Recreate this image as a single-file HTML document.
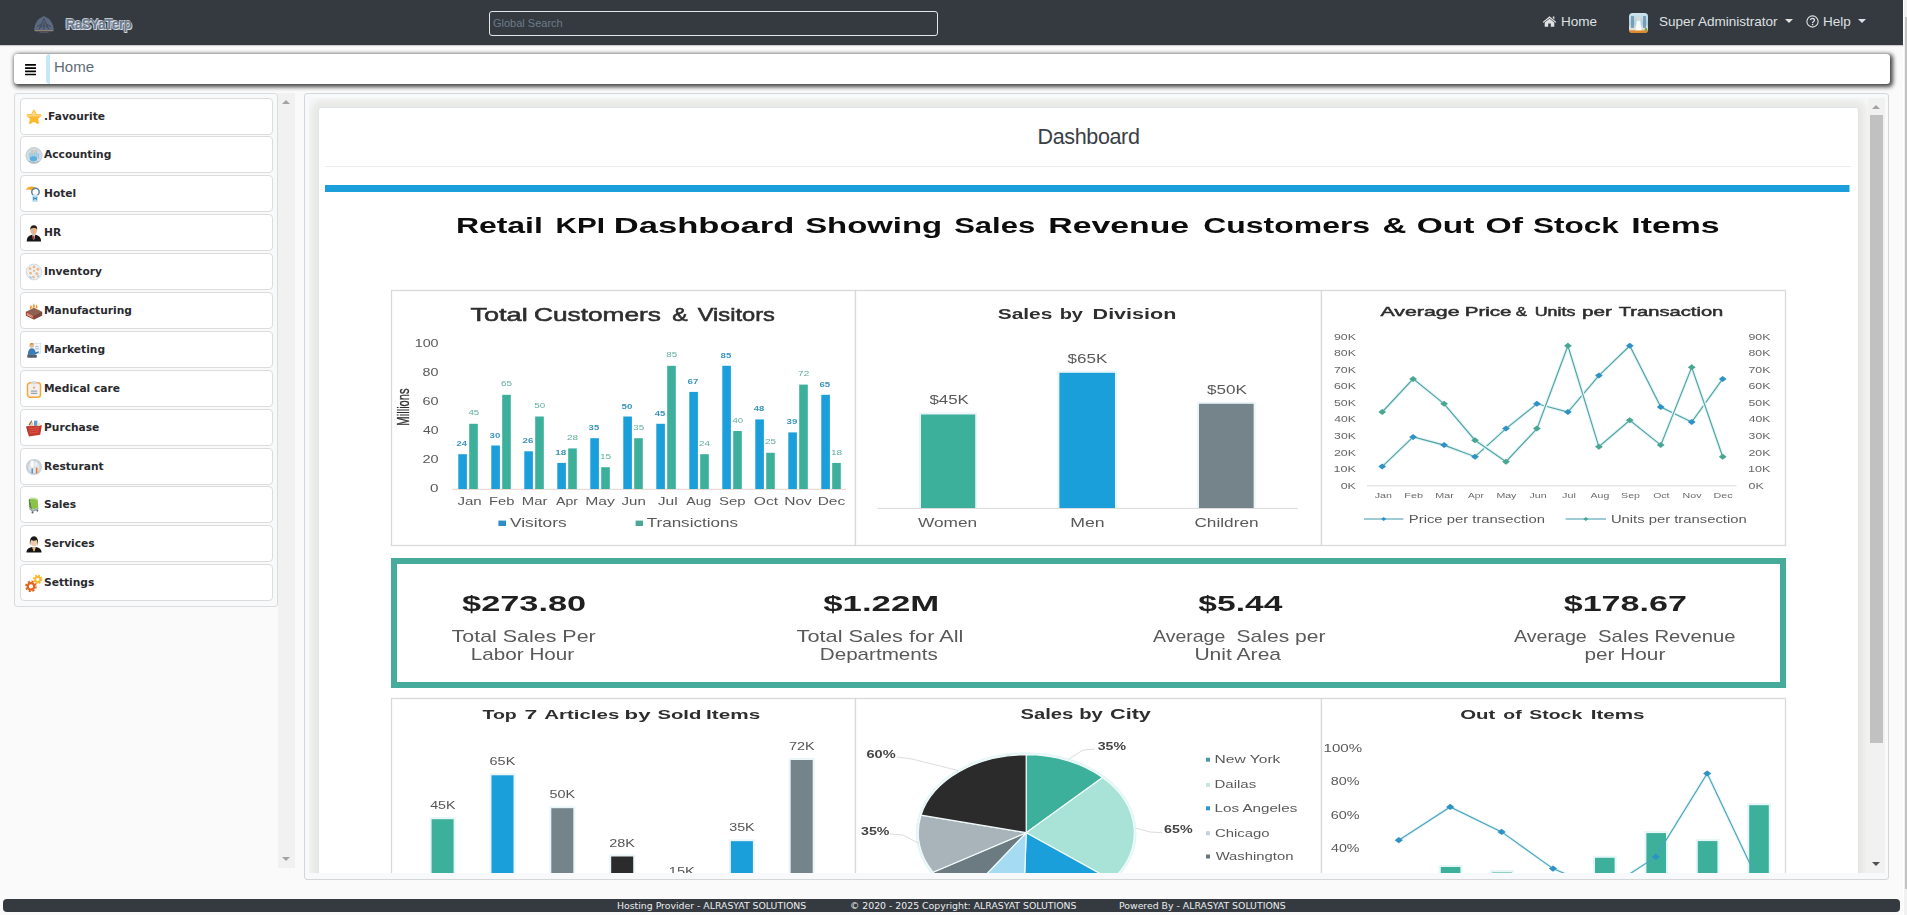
<!DOCTYPE html>
<html lang="en">
<head>
<meta charset="utf-8">
<title>RaSYaTerp - Home</title>
<style>
*{box-sizing:border-box}
html,body{margin:0;padding:0}
body{width:1907px;height:915px;overflow:hidden;background:#fafafa;font-family:"Liberation Sans",Arial,sans-serif;position:relative;color:#212529}
.abs{position:absolute}
/* ---------- top navbar ---------- */
#nav{position:absolute;left:0;top:0;width:1903px;height:45px;background:#343a40;box-shadow:0 1px 1px rgba(0,0,0,.18)}
#brand{position:absolute;left:65.5px;top:13.7px;font-size:14px;font-weight:bold;color:#6b7a90;letter-spacing:-.8px;line-height:20px;text-shadow:.9px .9px 0 rgba(238,242,247,.9),-.8px -.6px 0 rgba(238,242,247,.75),-.8px .8px 0 rgba(238,242,247,.6)}
#search{position:absolute;left:489px;top:11px;width:449px;height:25px;border:1px solid #e4e6e8;border-radius:3px;color:#6c7b8b;font-size:11px;line-height:23px;padding-left:3px}
.navtxt{position:absolute;top:13px;font-size:13.5px;line-height:18px;color:#dfe1e4;white-space:nowrap}
.caret{position:absolute;width:0;height:0;border-left:4.2px solid transparent;border-right:4.2px solid transparent;border-top:4.2px solid #dfe1e3}
/* ---------- page scrollbar sliver ---------- */
#pgsb{position:absolute;left:1903px;top:0;width:4px;height:915px;background:#f1f1f1;border-left:1px solid #fff}
#pgsb i{position:absolute;left:1px;top:17px;width:3px;height:872px;background:#c1c1c1}
/* ---------- breadcrumb ---------- */
#crumb{position:absolute;left:14px;top:54px;width:1876px;height:30px;background:#fff;border-radius:3.5px;box-shadow:1.5px 1.5px 4px 1px rgba(0,0,0,.72)}
#crumb .sep{position:absolute;left:32px;top:0;width:9px;height:30px;border-left:4px solid #c6e7f4;border-radius:4px 0 0 4px}
#crumb .home{position:absolute;left:40px;top:3.4px;font-size:15px;line-height:20px;color:#5d6c78}
#burger{position:absolute;left:11px;top:9.65px;width:11px;height:12px}
#burger i{position:absolute;left:0;width:11px;height:1.7px;background:#000;border-radius:.5px}
/* ---------- sidebar ---------- */
#side{position:absolute;left:14px;top:93px;width:264px;height:514px;border:1px solid #d9dbdd;border-radius:3px;background:#f8f9fb}
.mi{position:absolute;left:5px;width:253px;height:37px;background:#fff;border:1px solid #dcdcdc;border-radius:4px}
.mi span{position:absolute;left:23px;top:11px;font-family:"DejaVu Sans",Verdana,sans-serif;font-weight:bold;font-size:10.67px;line-height:14px;color:#2a2a2e;white-space:nowrap}
.mi svg{position:absolute;left:4px;top:9px;width:18px;height:18px}
#sidesb{position:absolute;left:278px;top:93px;width:17px;height:775px;background:#f1f1f1}
.arr{position:absolute;width:0;height:0;border-left:4px solid transparent;border-right:4px solid transparent}
/* ---------- main ---------- */
#main{position:absolute;left:304px;top:93px;width:1585px;height:787px;border:1px solid #d4d6d8;border-radius:3px;background:#f8f9fb}
#scroll{position:absolute;left:4px;top:4px;width:1576px;height:775px;overflow:hidden;background:#f8f9fa}
#card{position:absolute;left:9px;top:9px;width:1541px;height:900px;background:#fff;border:1px solid #dfe4ea;border-radius:3px;box-shadow:0 0 9px 7px #e7e7e4}
#ttl{position:absolute;left:0;top:13.6px;width:100%;text-align:center;font-size:21.5px;letter-spacing:-.35px;line-height:30px;color:#3a3e47}
#dash{position:absolute;left:0;top:0;filter:blur(.55px)}
#hr{position:absolute;left:6px;top:58px;width:1526px;height:1px;background:#eaeced}
#msb{position:absolute;left:1559px;top:0;width:17px;height:775px;background:#f1f1f1}
#msb .th{position:absolute;left:2px;top:17px;width:13px;height:628px;background:#c1c1c1}
/* ---------- footer ---------- */
#foot{position:absolute;left:3px;top:899px;width:1897px;height:13px;background:#343a40;border-radius:4px;color:#eceef0;font-family:"DejaVu Sans",Tahoma,sans-serif;font-size:9.33px;line-height:13px;white-space:nowrap}
#foot span{position:absolute;top:0}
</style>
</head>
<body>
<div id="nav">
  <svg class="abs" style="left:33px;top:15px" width="22" height="20" viewBox="0 0 22 20"><path d="M10.900 1Q16 3 18.400 7Q20.500 10 20.800 14V15.600Q20.800 16.300 20 16.300H2Q1.200 16.300 1.200 15.600V14Q1.500 10 3.400 7Q6 3 10.900 1Z" fill="#5a6880"/><path d="M10.900 3.500L6 14.500M10.900 3.500L15.800 14.500M10.900 7V14.500M4 11.500L8.700 9M17.800 11.500L13.100 9M7.500 12.500l3.400-2.600 3.400 2.600" stroke="#3d4553" stroke-width=".9" fill="none"/><rect x="2" y="15" width="17.800" height="1.200" fill="#92806c"/><rect x="6.500" y="17.200" width="9" height=".9" fill="#505a6b"/></svg>
  <div id="brand">RaSYaTerp</div>
  <div id="search">Global Search</div>
  <svg class="abs" style="left:1542px;top:15px" width="15" height="12" viewBox="0 0 15 12"><path d="M7.5 1.2 L14.3 6.9 L13.5 7.8 L7.5 2.9 L1.5 7.8 L0.7 6.9Z M10.8 1.4h1.6v3l-1.6-1.35Z M2.7 7.6 L7.5 3.7 L12.3 7.6 V11.8 H8.8 V8.6 H6.2 V11.8 H2.7Z" fill="#dfe1e3"/></svg>
  <div class="navtxt" style="left:1561px">Home</div>
  <svg class="abs" style="left:1629px;top:13px" width="19" height="20" viewBox="0 0 19 20"><defs><clipPath id="avc"><rect width="19" height="20" rx="3.5"/></clipPath><linearGradient id="avg" x1="0" y1="0" x2="0" y2="1"><stop offset="0" stop-color="#cfe4ee"/><stop offset=".55" stop-color="#a9cfe0"/><stop offset=".8" stop-color="#e8e6e0"/><stop offset="1" stop-color="#d98a36"/></linearGradient></defs><g clip-path="url(#avc)"><rect width="19" height="20" fill="url(#avg)"/><rect x="2" y="3" width="3" height="12" fill="#5f87a0" opacity=".7"/><rect x="14" y="3" width="3" height="12" fill="#5f87a0" opacity=".7"/><path d="M6.5 19 L7.5 8.5 Q9.5 6.5 11.5 8.5 L12.5 19Z" fill="#f7fbfd"/><circle cx="9.5" cy="6" r="1.8" fill="#e9d6c4"/><rect x="0" y="17.5" width="19" height="2.5" fill="#dd8a2e"/><circle cx="17" cy="16.5" r="1.4" fill="#6aa84f"/></g></svg>
  <div class="navtxt" style="left:1659px">Super Administrator</div>
  <div class="caret" style="left:1784.8px;top:19px"></div>
  <svg class="abs" style="left:1806px;top:15px" width="13" height="13" viewBox="0 0 13 13"><circle cx="6.5" cy="6.5" r="5.6" fill="none" stroke="#dfe1e3" stroke-width="1.1"/><path d="M4.6 5.1 C4.6 2.9 8.5 2.9 8.5 5.1 C8.5 6.5 6.6 6.5 6.6 7.9" fill="none" stroke="#dfe1e3" stroke-width="1.3"/><rect x="5.9" y="8.8" width="1.4" height="1.4" fill="#dfe1e3"/></svg>
  <div class="navtxt" style="left:1823px">Help</div>
  <div class="caret" style="left:1858.3px;top:19px"></div>
</div>
<div id="pgsb"><i></i></div>

<div id="crumb">
  <svg id="burger" viewBox="0 0 11 12"><rect x="0" y="0" width="11" height="1.700" rx=".4"/><rect x="0" y="3.250" width="11" height="1.700" rx=".4"/><rect x="0" y="6.450" width="11" height="1.700" rx=".4"/><rect x="0" y="9.650" width="11" height="1.700" rx=".4"/></svg>
  <div class="sep"></div>
  <div class="home">Home</div>
</div>

<div id="side">
<div class="mi" style="top:4px"><svg viewBox="0 0 16 16"><path d="M8 2.300l1.700 3.700 4 .5-3 2.800.8 4L8 11.300 4.500 13.300l.8-4-3-2.800 4-.5z" fill="#fdb92a" stroke="#fdb92a" stroke-width="1.800" stroke-linejoin="round"/><path d="M8 1.600l2 4.200 4.600.5-1.300 1.200H2.700L1.400 6.300l4.600-.5z" fill="#ffd88c" opacity=".85"/></svg><span>.Favourite</span></div>
<div class="mi" style="top:42px"><svg viewBox="0 0 16 16"><circle cx="8" cy="8.500" r="7.200" fill="#d3dbe0"/><circle cx="8" cy="8.500" r="7.200" fill="none" stroke="#bcc7cd" stroke-width=".7"/><path d="M4.500 11V6M6.300 11V3.800M8.200 11V5M10 11V3.500M11.800 11V6.500" stroke="#8cc3e2" stroke-width="1.100"/><path d="M5 3.500l5.500 1.200M6 6.200l5.500-1.700" stroke="#e6c9a4" stroke-width=".7"/><ellipse cx="7.500" cy="11.300" rx="3.200" ry="2.300" fill="#5aaee0"/><path d="M3.500 13.500q4.500 2.500 9 0" stroke="#aab7be" stroke-width=".9" fill="none"/></svg><span>Accounting</span></div>
<div class="mi" style="top:81px"><svg viewBox="0 0 16 16"><path d="M.5 4.2C3 .8 7.5 .6 10.5 3.2L6.3 4.9Q3.5 3.4 .5 4.2z" fill="#f7a823"/><circle cx="9.3" cy="6.2" r="3.3" fill="none" stroke="#5d7f9b" stroke-width="1.3"/><rect x="6.3" y="8.6" width="5.2" height="6.6" rx="1.2" fill="#c4e4f4"/><path d="M7.8 10.4v3.2M10 10.4v3.2M7.8 12h2.2" stroke="#3f7fb0" stroke-width=".9"/></svg><span>Hotel</span></div>
<div class="mi" style="top:120px"><svg viewBox="0 0 16 16"><path d="M1.5 15.5C1.5 11 4.5 9.6 7.8 9.6S14.3 11 14.3 15.5z" fill="#17171a"/><path d="M6.6 9.8h2.4l-.4 3.4-.8.9-.8-.9z" fill="#f3f3f3"/><path d="M7.3 10.3h1l.3 2.6-.8.8-.8-.8z" fill="#c4241c"/><ellipse cx="7.7" cy="5.6" rx="2.9" ry="3.5" fill="#e4b590"/><path d="M4.7 5.2C4.5 2 6.3 1 7.9 1s3.3 1 2.9 4.1C10 3.6 8.700 3.500 7.600 3.600 6 3.700 5.200 4.100 4.700 5.200z" fill="#2a2018"/></svg><span>HR</span></div>
<div class="mi" style="top:159px"><svg viewBox="0 0 16 16"><circle cx="8" cy="8" r="7" fill="#edf0f2"/><circle cx="8" cy="8" r="7" fill="none" stroke="#cfd6db" stroke-width=".8"/><g fill="#eeb98a"><circle cx="4.500" cy="5" r="1.300"/><circle cx="8" cy="3.500" r="1.200"/><circle cx="11.500" cy="5.500" r="1.300"/><circle cx="5" cy="9" r="1.200"/><circle cx="10.500" cy="9.500" r="1.300"/><circle cx="7.500" cy="12.500" r="1.200"/><circle cx="8" cy="7" r="1"/></g><path d="M4 12l2 1.500M11 12.500l1.500-1.500" stroke="#8fb9d3" stroke-width=".9"/></svg><span>Inventory</span></div>
<div class="mi" style="top:198px"><svg viewBox="0 0 16 16"><path d="M.8 8.600L8 5l7.200 3.600v3.400L8 15.600.8 12z" fill="#8d6250"/><path d="M.8 8.600L8 12.200v3.400L.8 12z" fill="#b43a2c"/><path d="M8 12.200l7.200-3.600V12L8 15.600z" fill="#7a4a3c"/><path d="M4.200 6.500c0-2 1-2.500.8-4.300 1 1 1.200 2.300 1 3.300zM6.800 5.500c0-2 1-2.600.8-4.400 1 1 1.300 2.400 1.100 3.400zM9.400 6c0-1.800.9-2.300.7-3.900.9.900 1.100 2.100.9 3.100z" fill="#f08a24"/><path d="M2 10.200l4.500 2.200v1.300L2 11.500zM2.500 10.900v.9M3.800 11.500v.9M5.100 12.100v.9" stroke="#f0d9c8" stroke-width=".5" fill="none"/></svg><span>Manufacturing</span></div>
<div class="mi" style="top:237px"><svg viewBox="0 0 16 16"><rect x="7.500" y="2" width="6.500" height="9" fill="#f4f6f8" stroke="#d3dae0" stroke-width=".6"/><circle cx="5.800" cy="4" r="2" fill="#e9b98f"/><path d="M4.200 3.200C4.400 1.500 7 1.300 7.600 3z" fill="#d9832a"/><path d="M2.500 12.500C2.500 8.500 4 6.500 6 6.500s3 1.500 3.500 3.500l2.500-1 .5 1.300-3.700 2z" fill="#3a7cb4"/><rect x="2" y="12.300" width="8.500" height="2.500" rx=".6" fill="#54606b"/><path d="M9 5l3 0M9 7l3.500 0" stroke="#7fb1d6" stroke-width=".7"/></svg><span>Marketing</span></div>
<div class="mi" style="top:276px"><svg viewBox="0 0 16 16"><rect x="2.200" y="2.500" width="11.600" height="12.800" rx="2.400" fill="#f1f1f1" stroke="#f5a836" stroke-width="1.300"/><rect x="5.700" y="1" width="4.600" height="2.800" rx=".8" fill="#d5d9dc"/><circle cx="8" cy="6.800" r="1" fill="#f0a868"/><path d="M5.200 9.800h5.600M5.200 11.800h5.600" stroke="#9ba3a9" stroke-width="1.100"/></svg><span>Medical care</span></div>
<div class="mi" style="top:315px"><svg viewBox="0 0 16 16"><path d="M1 6.500l14-1-1.500 8.500-10 1.500z" fill="#c63a2e"/><path d="M1 6.500l2.500 9L2 8z" fill="#8f241c"/><path d="M3.500 8.500l9-.8M3.800 10.500l8.400-.9M4.200 12.500l7.600-1" stroke="#e4675b" stroke-width=".6"/><circle cx="5.500" cy="4.500" r="2" fill="#e6c9a5"/><rect x="8" y="1.500" width="3" height="4.500" fill="#5d9ad0"/><circle cx="12.200" cy="4.800" r="1.500" fill="#f2e2c4"/><path d="M3.500 5.500L6 1.500" stroke="#7a5b45" stroke-width=".9"/></svg><span>Purchase</span></div>
<div class="mi" style="top:354px"><svg viewBox="0 0 16 16"><circle cx="8" cy="8" r="7.200" fill="#c9d1d6"/><circle cx="8" cy="8" r="5" fill="#dfe5e8"/><path d="M5.500 2.500v4.200c0 1 1.800 1 1.800 0V2.500M6.400 2.500v11" stroke="#fbfcfd" stroke-width=".9" fill="none"/><path d="M10.300 2.500c-1.200 1.200-1.300 4.300 0 5.500v1z" fill="#fbfcfd"/><rect x="9.700" y="8.500" width="1.300" height="5.300" rx=".5" fill="#e9772b"/><rect x="5.800" y="9" width="1.200" height="4.800" rx=".5" fill="#3f86bd"/></svg><span>Resturant</span></div>
<div class="mi" style="top:392px"><svg viewBox="0 0 16 16"><path d="M4.300 2.200l7 .8.500 7.500-5.300 1.800z" fill="#8bc34a"/><path d="M4.300 2.200l2.200 10.100-2.700-2.200-.5-6.500z" fill="#558b2f"/><path d="M4.300 2.200l7 .8-1.500-1.500-4.700-.5z" fill="#c5e1a5"/><path d="M3.800 10.200l2.700 2.200 5.300-1.900.2 1.500-5.500 2.200-2.700-2.500z" fill="#9aa3aa"/><circle cx="6.700" cy="14.600" r=".9" fill="#5a6268"/><circle cx="11" cy="13" r=".8" fill="#5a6268"/></svg><span>Sales</span></div>
<div class="mi" style="top:431px"><svg viewBox="0 0 16 16"><path d="M1.300 15.500c0-3.500 3-4.800 6.700-4.800s6.700 1.300 6.700 4.800z" fill="#141416"/><path d="M6.300 10.800h3.400L8 14.800z" fill="#f4f4f4"/><path d="M7.500 11.200h1l.4 2.200-.9 1-.9-1z" fill="#f0a62b"/><ellipse cx="8" cy="6.600" rx="2.700" ry="3.300" fill="#efc8a6"/><path d="M4.600 9.500C3.600 3.500 5.700 1 8 1s4.400 2.500 3.400 8.500c-.2-2.500-.4-4.200-1.200-5-1.400.7-3.300.7-4.600 0-.7.800-.9 2.500-1 5z" fill="#1d1a18"/></svg><span>Services</span></div>
<div class="mi" style="top:470px"><svg viewBox="0 0 16 16"><g fill="none" stroke-linecap="butt"><circle cx="5.300" cy="11" r="2.900" stroke="#e3621d" stroke-width="2"/><circle cx="5.300" cy="11" r="4.400" stroke="#e3621d" stroke-width="1.500" stroke-dasharray="1.900 1.560"/><circle cx="11.300" cy="4.800" r="2.300" stroke="#f8b62a" stroke-width="1.700"/><circle cx="11.300" cy="4.800" r="3.600" stroke="#f8b62a" stroke-width="1.300" stroke-dasharray="1.550 1.280"/></g></svg><span>Settings</span></div>
</div>
<div id="sidesb"><div class="arr" style="left:4px;top:7px;border-bottom:4px solid #a3a3a3"></div><div class="arr" style="left:4px;top:764px;border-top:4px solid #a3a3a3"></div></div>

<div id="main">
  <div id="scroll">
    <div id="card">
      <div id="ttl">Dashboard</div>
      <div id="hr"></div>
      <svg id="dash" viewBox="319 108 1538 900" width="1538" height="900" font-family="Liberation Sans, Arial, sans-serif">
<rect x="325" y="185" width="1524.5" height="7" fill="#1b9fdb"/>
<text x="455.9" y="232.8" font-size="22.8" font-weight="bold" fill="#0d0d0d" textLength="87" lengthAdjust="spacingAndGlyphs">Retail</text>
<text x="555.5" y="232.8" font-size="22.8" font-weight="bold" fill="#0d0d0d" textLength="49.4" lengthAdjust="spacingAndGlyphs">KPI</text>
<text x="613.8" y="232.8" font-size="22.8" font-weight="bold" fill="#0d0d0d" textLength="180.6" lengthAdjust="spacingAndGlyphs">Dashboard</text>
<text x="805.2" y="232.8" font-size="22.8" font-weight="bold" fill="#0d0d0d" textLength="137" lengthAdjust="spacingAndGlyphs">Showing</text>
<text x="954.2" y="232.8" font-size="22.8" font-weight="bold" fill="#0d0d0d" textLength="81" lengthAdjust="spacingAndGlyphs">Sales</text>
<text x="1048.3" y="232.8" font-size="22.8" font-weight="bold" fill="#0d0d0d" textLength="140.8" lengthAdjust="spacingAndGlyphs">Revenue</text>
<text x="1203.3" y="232.8" font-size="22.8" font-weight="bold" fill="#0d0d0d" textLength="166.8" lengthAdjust="spacingAndGlyphs">Customers</text>
<text x="1382.4" y="232.8" font-size="22.8" font-weight="bold" fill="#0d0d0d" textLength="23.9" lengthAdjust="spacingAndGlyphs">&amp;</text>
<text x="1416.7" y="232.8" font-size="22.8" font-weight="bold" fill="#0d0d0d" textLength="57.6" lengthAdjust="spacingAndGlyphs">Out</text>
<text x="1485.5" y="232.8" font-size="22.8" font-weight="bold" fill="#0d0d0d" textLength="37.4" lengthAdjust="spacingAndGlyphs">Of</text>
<text x="1533" y="232.8" font-size="22.8" font-weight="bold" fill="#0d0d0d" textLength="85.9" lengthAdjust="spacingAndGlyphs">Stock</text>
<text x="1631.3" y="232.8" font-size="22.8" font-weight="bold" fill="#0d0d0d" textLength="88.3" lengthAdjust="spacingAndGlyphs">Items</text>
<rect x="391.5" y="290.5" width="464" height="255" fill="#fff" stroke="#d9d9d9" stroke-width="1.3"/>
<rect x="855.5" y="290.5" width="466" height="255" fill="#fff" stroke="#d9d9d9" stroke-width="1.3"/>
<rect x="1321.5" y="290.5" width="464" height="255" fill="#fff" stroke="#d9d9d9" stroke-width="1.3"/>
<rect x="391.5" y="698.5" width="464" height="232" fill="#fff" stroke="#d9d9d9" stroke-width="1.3"/>
<rect x="855.5" y="698.5" width="466" height="232" fill="#fff" stroke="#d9d9d9" stroke-width="1.3"/>
<rect x="1321.5" y="698.5" width="464" height="232" fill="#fff" stroke="#d9d9d9" stroke-width="1.3"/>
<text x="470.5" y="320.5" font-size="18.6" fill="#2e2e2e" textLength="57.2" lengthAdjust="spacingAndGlyphs" stroke="#2e2e2e" stroke-width=".55">Total</text>
<text x="534" y="320.5" font-size="18.6" fill="#2e2e2e" textLength="126.9" lengthAdjust="spacingAndGlyphs" stroke="#2e2e2e" stroke-width=".55">Customers</text>
<text x="672.2" y="320.5" font-size="18.6" fill="#2e2e2e" textLength="15.4" lengthAdjust="spacingAndGlyphs" stroke="#2e2e2e" stroke-width=".55">&amp;</text>
<text x="697.7" y="320.5" font-size="18.6" fill="#2e2e2e" textLength="77.3" lengthAdjust="spacingAndGlyphs" stroke="#2e2e2e" stroke-width=".55">Visitors</text>
<text x="430" y="492.4" font-size="10.9" fill="#595959" textLength="8.5" lengthAdjust="spacingAndGlyphs">0</text>
<text x="422.4" y="463.4" font-size="10.9" fill="#595959" textLength="16.1" lengthAdjust="spacingAndGlyphs">20</text>
<text x="422.9" y="434.4" font-size="10.9" fill="#595959" textLength="15.6" lengthAdjust="spacingAndGlyphs">40</text>
<text x="422.4" y="405.4" font-size="10.9" fill="#595959" textLength="16.1" lengthAdjust="spacingAndGlyphs">60</text>
<text x="422.6" y="376.4" font-size="10.9" fill="#595959" textLength="15.9" lengthAdjust="spacingAndGlyphs">80</text>
<text x="414.7" y="347.4" font-size="10.9" fill="#595959" textLength="23.9" lengthAdjust="spacingAndGlyphs">100</text>
<text transform="translate(409.2,407) rotate(-90)" text-anchor="middle" font-size="17" fill="#2f2f2f" stroke="#2f2f2f" stroke-width=".3" textLength="37.3" lengthAdjust="spacingAndGlyphs">Millions</text>
<line x1="452" y1="489.3" x2="846" y2="489.3" stroke="#e3d3cf" stroke-width="1"/>
<rect x="458.3" y="454.2" width="8.6" height="34.8" fill="#1b9fdb"/>
<rect x="469.2" y="423.8" width="8.6" height="65.2" fill="#3cb09b"/>
<text x="456.6" y="446.2" font-size="7.2" font-weight="bold" fill="#3a93bd" textLength="10.4" lengthAdjust="spacingAndGlyphs">24</text>
<text x="468.4" y="415.4" font-size="7.2" fill="#5fae9f" textLength="10.7" lengthAdjust="spacingAndGlyphs">45</text>
<text x="457.4" y="504.5" font-size="10.9" fill="#595959" textLength="24.3" lengthAdjust="spacingAndGlyphs">Jan</text>
<rect x="491.3" y="445.5" width="8.6" height="43.5" fill="#1b9fdb"/>
<rect x="502.2" y="394.8" width="8.6" height="94.2" fill="#3cb09b"/>
<text x="489.6" y="437.5" font-size="7.2" font-weight="bold" fill="#3a93bd" textLength="10.7" lengthAdjust="spacingAndGlyphs">30</text>
<text x="501.1" y="386.4" font-size="7.2" fill="#5fae9f" textLength="11" lengthAdjust="spacingAndGlyphs">65</text>
<text x="489" y="504.5" font-size="10.9" fill="#595959" textLength="25.4" lengthAdjust="spacingAndGlyphs">Feb</text>
<rect x="524.3" y="451.3" width="8.6" height="37.7" fill="#1b9fdb"/>
<rect x="535.2" y="416.5" width="8.6" height="72.5" fill="#3cb09b"/>
<text x="522.5" y="443.3" font-size="7.2" font-weight="bold" fill="#3a93bd" textLength="10.8" lengthAdjust="spacingAndGlyphs">26</text>
<text x="534.2" y="408.2" font-size="7.2" fill="#5fae9f" textLength="10.9" lengthAdjust="spacingAndGlyphs">50</text>
<text x="521.8" y="504.5" font-size="10.9" fill="#595959" textLength="25.7" lengthAdjust="spacingAndGlyphs">Mar</text>
<rect x="557.3" y="462.9" width="8.6" height="26.1" fill="#1b9fdb"/>
<rect x="568.2" y="448.4" width="8.6" height="40.6" fill="#3cb09b"/>
<text x="555.2" y="454.9" font-size="7.2" font-weight="bold" fill="#3a93bd" textLength="11" lengthAdjust="spacingAndGlyphs">18</text>
<text x="567.1" y="440.1" font-size="7.2" fill="#5fae9f" textLength="11" lengthAdjust="spacingAndGlyphs">28</text>
<text x="556" y="504.5" font-size="10.9" fill="#595959" textLength="21.9" lengthAdjust="spacingAndGlyphs">Apr</text>
<rect x="590.3" y="438.2" width="8.6" height="50.8" fill="#1b9fdb"/>
<rect x="601.2" y="467.2" width="8.6" height="21.8" fill="#3cb09b"/>
<text x="588.6" y="430.2" font-size="7.2" font-weight="bold" fill="#3a93bd" textLength="10.6" lengthAdjust="spacingAndGlyphs">35</text>
<text x="599.9" y="458.9" font-size="7.2" fill="#5fae9f" textLength="11.3" lengthAdjust="spacingAndGlyphs">15</text>
<text x="585.2" y="504.5" font-size="10.9" fill="#595959" textLength="29.7" lengthAdjust="spacingAndGlyphs">May</text>
<rect x="623.3" y="416.5" width="8.6" height="72.5" fill="#1b9fdb"/>
<rect x="634.2" y="438.2" width="8.6" height="50.8" fill="#3cb09b"/>
<text x="621.5" y="408.5" font-size="7.2" font-weight="bold" fill="#3a93bd" textLength="10.8" lengthAdjust="spacingAndGlyphs">50</text>
<text x="633.3" y="429.9" font-size="7.2" fill="#5fae9f" textLength="10.9" lengthAdjust="spacingAndGlyphs">35</text>
<text x="621.5" y="504.5" font-size="10.9" fill="#595959" textLength="24.3" lengthAdjust="spacingAndGlyphs">Jun</text>
<rect x="656.3" y="423.8" width="8.6" height="65.2" fill="#1b9fdb"/>
<rect x="667.2" y="365.8" width="8.6" height="123.2" fill="#3cb09b"/>
<text x="654.7" y="415.8" font-size="7.2" font-weight="bold" fill="#3a93bd" textLength="10.5" lengthAdjust="spacingAndGlyphs">45</text>
<text x="666.2" y="357.4" font-size="7.2" fill="#5fae9f" textLength="10.9" lengthAdjust="spacingAndGlyphs">85</text>
<text x="657.8" y="504.5" font-size="10.9" fill="#595959" textLength="20" lengthAdjust="spacingAndGlyphs">Jul</text>
<rect x="689.3" y="391.9" width="8.6" height="97.1" fill="#1b9fdb"/>
<rect x="700.2" y="454.2" width="8.6" height="34.8" fill="#3cb09b"/>
<text x="687.5" y="383.9" font-size="7.2" font-weight="bold" fill="#3a93bd" textLength="10.9" lengthAdjust="spacingAndGlyphs">67</text>
<text x="699.1" y="445.9" font-size="7.2" fill="#5fae9f" textLength="10.9" lengthAdjust="spacingAndGlyphs">24</text>
<text x="686.3" y="504.5" font-size="10.9" fill="#595959" textLength="25" lengthAdjust="spacingAndGlyphs">Aug</text>
<rect x="722.3" y="365.8" width="8.6" height="123.2" fill="#1b9fdb"/>
<rect x="733.2" y="431" width="8.6" height="58" fill="#3cb09b"/>
<text x="720.6" y="357.8" font-size="7.2" font-weight="bold" fill="#3a93bd" textLength="10.7" lengthAdjust="spacingAndGlyphs">85</text>
<text x="732.4" y="422.7" font-size="7.2" fill="#5fae9f" textLength="10.7" lengthAdjust="spacingAndGlyphs">40</text>
<text x="719" y="504.5" font-size="10.9" fill="#595959" textLength="26.6" lengthAdjust="spacingAndGlyphs">Sep</text>
<rect x="755.3" y="419.4" width="8.6" height="69.6" fill="#1b9fdb"/>
<rect x="766.2" y="452.8" width="8.6" height="36.2" fill="#3cb09b"/>
<text x="753.7" y="411.4" font-size="7.2" font-weight="bold" fill="#3a93bd" textLength="10.5" lengthAdjust="spacingAndGlyphs">48</text>
<text x="765.1" y="444.4" font-size="7.2" fill="#5fae9f" textLength="11" lengthAdjust="spacingAndGlyphs">25</text>
<text x="753.8" y="504.5" font-size="10.9" fill="#595959" textLength="24.2" lengthAdjust="spacingAndGlyphs">Oct</text>
<rect x="788.3" y="432.4" width="8.6" height="56.6" fill="#1b9fdb"/>
<rect x="799.2" y="384.6" width="8.6" height="104.4" fill="#3cb09b"/>
<text x="786.6" y="424.4" font-size="7.2" font-weight="bold" fill="#3a93bd" textLength="10.7" lengthAdjust="spacingAndGlyphs">39</text>
<text x="798.1" y="376.3" font-size="7.2" fill="#5fae9f" textLength="11.1" lengthAdjust="spacingAndGlyphs">72</text>
<text x="784.2" y="504.5" font-size="10.9" fill="#595959" textLength="27.6" lengthAdjust="spacingAndGlyphs">Nov</text>
<rect x="821.3" y="394.8" width="8.6" height="94.2" fill="#1b9fdb"/>
<rect x="832.2" y="462.9" width="8.6" height="26.1" fill="#3cb09b"/>
<text x="819.5" y="386.8" font-size="7.2" font-weight="bold" fill="#3a93bd" textLength="10.7" lengthAdjust="spacingAndGlyphs">65</text>
<text x="830.9" y="454.6" font-size="7.2" fill="#5fae9f" textLength="11.3" lengthAdjust="spacingAndGlyphs">18</text>
<text x="817.7" y="504.5" font-size="10.9" fill="#595959" textLength="27.5" lengthAdjust="spacingAndGlyphs">Dec</text>
<rect x="498.4" y="520.6" width="7.6" height="5.4" fill="#2b8fc4"/>
<text x="510" y="527.2" font-size="13.5" fill="#595959" textLength="56.6" lengthAdjust="spacingAndGlyphs">Visitors</text>
<rect x="635.6" y="520.6" width="7.4" height="5.4" fill="#48a897"/>
<text x="646.7" y="527.2" font-size="13.5" fill="#595959" textLength="91.3" lengthAdjust="spacingAndGlyphs">Transictions</text>
<text x="997.7" y="318.5" font-size="14.9" font-weight="bold" fill="#2e2e2e" textLength="54.7" lengthAdjust="spacingAndGlyphs">Sales</text>
<text x="1059.7" y="318.5" font-size="14.9" font-weight="bold" fill="#2e2e2e" textLength="23.3" lengthAdjust="spacingAndGlyphs">by</text>
<text x="1092.6" y="318.5" font-size="14.9" font-weight="bold" fill="#2e2e2e" textLength="83.7" lengthAdjust="spacingAndGlyphs">Division</text>
<line x1="877.5" y1="508.4" x2="1297.6" y2="508.4" stroke="#d9d9d9" stroke-width="1"/>
<rect x="919" y="412.5" width="58.2" height="95.5" fill="#e9f5f8"/>
<rect x="921" y="414.5" width="54.2" height="93.5" fill="#3cb09b"/>
<text x="929.4" y="404.3" font-size="13.5" fill="#595959" textLength="39.5" lengthAdjust="spacingAndGlyphs">$45K</text>
<text x="918" y="527" font-size="13.5" fill="#595959" textLength="59.1" lengthAdjust="spacingAndGlyphs">Women</text>
<rect x="1057.4" y="370.8" width="59.6" height="137.2" fill="#e9f5f8"/>
<rect x="1059.4" y="372.8" width="55.6" height="135.2" fill="#1b9fdb"/>
<text x="1067.6" y="362.6" font-size="13.5" fill="#595959" textLength="39.8" lengthAdjust="spacingAndGlyphs">$65K</text>
<text x="1070.2" y="527" font-size="13.5" fill="#595959" textLength="34.4" lengthAdjust="spacingAndGlyphs">Men</text>
<rect x="1197" y="401.8" width="58.6" height="106.2" fill="#e9f5f8"/>
<rect x="1199" y="403.8" width="54.6" height="104.2" fill="#75838b"/>
<text x="1207" y="393.6" font-size="13.5" fill="#595959" textLength="39.9" lengthAdjust="spacingAndGlyphs">$50K</text>
<text x="1194.4" y="527" font-size="13.5" fill="#595959" textLength="64.2" lengthAdjust="spacingAndGlyphs">Children</text>
<text x="1380.4" y="316.1" font-size="13.5" fill="#2e2e2e" textLength="79.2" lengthAdjust="spacingAndGlyphs" stroke="#2e2e2e" stroke-width=".5">Average</text>
<text x="1464.7" y="316.1" font-size="13.5" fill="#2e2e2e" textLength="46.8" lengthAdjust="spacingAndGlyphs" stroke="#2e2e2e" stroke-width=".5">Price</text>
<text x="1515.7" y="316.1" font-size="13.5" fill="#2e2e2e" textLength="11.2" lengthAdjust="spacingAndGlyphs" stroke="#2e2e2e" stroke-width=".5">&amp;</text>
<text x="1534.7" y="316.1" font-size="13.5" fill="#2e2e2e" textLength="40.7" lengthAdjust="spacingAndGlyphs" stroke="#2e2e2e" stroke-width=".5">Units</text>
<text x="1582.1" y="316.1" font-size="13.5" fill="#2e2e2e" textLength="29.9" lengthAdjust="spacingAndGlyphs" stroke="#2e2e2e" stroke-width=".5">per</text>
<text x="1618.8" y="316.1" font-size="13.5" fill="#2e2e2e" textLength="104.5" lengthAdjust="spacingAndGlyphs" stroke="#2e2e2e" stroke-width=".5">Transaction</text>
<text x="1340.7" y="488.6" font-size="9.3" fill="#666" textLength="15.2" lengthAdjust="spacingAndGlyphs">0K</text>
<text x="1748.6" y="488.6" font-size="9.3" fill="#666" textLength="15.2" lengthAdjust="spacingAndGlyphs">0K</text>
<text x="1333.6" y="472.1" font-size="9.3" fill="#666" textLength="22.4" lengthAdjust="spacingAndGlyphs">10K</text>
<text x="1748.1" y="472.1" font-size="9.3" fill="#666" textLength="22.4" lengthAdjust="spacingAndGlyphs">10K</text>
<text x="1333.9" y="455.5" font-size="9.3" fill="#666" textLength="22" lengthAdjust="spacingAndGlyphs">20K</text>
<text x="1748.4" y="455.5" font-size="9.3" fill="#666" textLength="22" lengthAdjust="spacingAndGlyphs">20K</text>
<text x="1334.1" y="439" font-size="9.3" fill="#666" textLength="21.8" lengthAdjust="spacingAndGlyphs">30K</text>
<text x="1748.6" y="439" font-size="9.3" fill="#666" textLength="21.8" lengthAdjust="spacingAndGlyphs">30K</text>
<text x="1334.3" y="422.4" font-size="9.3" fill="#666" textLength="21.7" lengthAdjust="spacingAndGlyphs">40K</text>
<text x="1748.8" y="422.4" font-size="9.3" fill="#666" textLength="21.7" lengthAdjust="spacingAndGlyphs">40K</text>
<text x="1334" y="405.9" font-size="9.3" fill="#666" textLength="21.9" lengthAdjust="spacingAndGlyphs">50K</text>
<text x="1748.5" y="405.9" font-size="9.3" fill="#666" textLength="21.9" lengthAdjust="spacingAndGlyphs">50K</text>
<text x="1333.9" y="389.3" font-size="9.3" fill="#666" textLength="22" lengthAdjust="spacingAndGlyphs">60K</text>
<text x="1748.4" y="389.3" font-size="9.3" fill="#666" textLength="22" lengthAdjust="spacingAndGlyphs">60K</text>
<text x="1333.9" y="372.8" font-size="9.3" fill="#666" textLength="22" lengthAdjust="spacingAndGlyphs">70K</text>
<text x="1748.4" y="372.8" font-size="9.3" fill="#666" textLength="22" lengthAdjust="spacingAndGlyphs">70K</text>
<text x="1334" y="356.2" font-size="9.3" fill="#666" textLength="21.9" lengthAdjust="spacingAndGlyphs">80K</text>
<text x="1748.5" y="356.2" font-size="9.3" fill="#666" textLength="21.9" lengthAdjust="spacingAndGlyphs">80K</text>
<text x="1333.9" y="339.7" font-size="9.3" fill="#666" textLength="22" lengthAdjust="spacingAndGlyphs">90K</text>
<text x="1748.4" y="339.7" font-size="9.3" fill="#666" textLength="22" lengthAdjust="spacingAndGlyphs">90K</text>
<line x1="1367" y1="485.8" x2="1736.5" y2="485.8" stroke="#d9d9d9" stroke-width="1"/>
<polyline points="1382.2,466.6 1413.2,436.9 1444.1,445.1 1475,456.7 1506,428.6 1537,403.8 1567.9,412 1598.9,375.6 1629.8,345.8 1660.8,407.1 1691.7,422 1722.7,378.9" fill="none" stroke="#e4f6f8" stroke-width="3.4"/>
<polyline points="1382.2,466.6 1413.2,436.9 1444.1,445.1 1475,456.7 1506,428.6 1537,403.8 1567.9,412 1598.9,375.6 1629.8,345.8 1660.8,407.1 1691.7,422 1722.7,378.9" fill="none" stroke="#52a0a0" stroke-width="1.15"/>
<polyline points="1382.2,412 1413.2,378.9 1444.1,403.8 1475,440.2 1506,461.7 1537,428.6 1567.9,345.8 1598.9,446.8 1629.8,420.3 1660.8,445.1 1691.7,367.3 1722.7,456.7" fill="none" stroke="#e4f6f8" stroke-width="3.4"/>
<polyline points="1382.2,412 1413.2,378.9 1444.1,403.8 1475,440.2 1506,461.7 1537,428.6 1567.9,345.8 1598.9,446.8 1629.8,420.3 1660.8,445.1 1691.7,367.3 1722.7,456.7" fill="none" stroke="#52a0a0" stroke-width="1.15"/>
<path d="M1378.3 466.6l3.9 -3l3.9 3l-3.9 3z" fill="#2f92c6"/>
<path d="M1409.2 436.9l3.9 -3l3.9 3l-3.9 3z" fill="#2f92c6"/>
<path d="M1440.2 445.1l3.9 -3l3.9 3l-3.9 3z" fill="#2f92c6"/>
<path d="M1471.1 456.7l3.9 -3l3.9 3l-3.9 3z" fill="#2f92c6"/>
<path d="M1502.1 428.6l3.9 -3l3.9 3l-3.9 3z" fill="#2f92c6"/>
<path d="M1533 403.8l3.9 -3l3.9 3l-3.9 3z" fill="#2f92c6"/>
<path d="M1564 412l3.9 -3l3.9 3l-3.9 3z" fill="#2f92c6"/>
<path d="M1595 375.6l3.9 -3l3.9 3l-3.9 3z" fill="#2f92c6"/>
<path d="M1625.9 345.8l3.9 -3l3.9 3l-3.9 3z" fill="#2f92c6"/>
<path d="M1656.8 407.1l3.9 -3l3.9 3l-3.9 3z" fill="#2f92c6"/>
<path d="M1687.8 422l3.9 -3l3.9 3l-3.9 3z" fill="#2f92c6"/>
<path d="M1718.8 378.9l3.9 -3l3.9 3l-3.9 3z" fill="#2f92c6"/>
<path d="M1378.3 412l3.9 -3l3.9 3l-3.9 3z" fill="#48a792"/>
<path d="M1409.2 378.9l3.9 -3l3.9 3l-3.9 3z" fill="#48a792"/>
<path d="M1440.2 403.8l3.9 -3l3.9 3l-3.9 3z" fill="#48a792"/>
<path d="M1471.1 440.2l3.9 -3l3.9 3l-3.9 3z" fill="#48a792"/>
<path d="M1502.1 461.7l3.9 -3l3.9 3l-3.9 3z" fill="#48a792"/>
<path d="M1533 428.6l3.9 -3l3.9 3l-3.9 3z" fill="#48a792"/>
<path d="M1564 345.8l3.9 -3l3.9 3l-3.9 3z" fill="#48a792"/>
<path d="M1595 446.8l3.9 -3l3.9 3l-3.9 3z" fill="#48a792"/>
<path d="M1625.9 420.3l3.9 -3l3.9 3l-3.9 3z" fill="#48a792"/>
<path d="M1656.8 445.1l3.9 -3l3.9 3l-3.9 3z" fill="#48a792"/>
<path d="M1687.8 367.3l3.9 -3l3.9 3l-3.9 3z" fill="#48a792"/>
<path d="M1718.8 456.7l3.9 -3l3.9 3l-3.9 3z" fill="#48a792"/>
<text x="1374.7" y="497.9" font-size="8.1" fill="#6a6a6a" textLength="17.2" lengthAdjust="spacingAndGlyphs">Jan</text>
<text x="1404.3" y="497.9" font-size="8.1" fill="#6a6a6a" textLength="18.8" lengthAdjust="spacingAndGlyphs">Feb</text>
<text x="1435.3" y="497.9" font-size="8.1" fill="#6a6a6a" textLength="18.5" lengthAdjust="spacingAndGlyphs">Mar</text>
<text x="1468" y="497.9" font-size="8.1" fill="#6a6a6a" textLength="15.9" lengthAdjust="spacingAndGlyphs">Apr</text>
<text x="1496.4" y="497.9" font-size="8.1" fill="#6a6a6a" textLength="20" lengthAdjust="spacingAndGlyphs">May</text>
<text x="1529.4" y="497.9" font-size="8.1" fill="#6a6a6a" textLength="17.2" lengthAdjust="spacingAndGlyphs">Jun</text>
<text x="1562.1" y="497.9" font-size="8.1" fill="#6a6a6a" textLength="13.8" lengthAdjust="spacingAndGlyphs">Jul</text>
<text x="1590.6" y="497.9" font-size="8.1" fill="#6a6a6a" textLength="18.7" lengthAdjust="spacingAndGlyphs">Aug</text>
<text x="1621.1" y="497.9" font-size="8.1" fill="#6a6a6a" textLength="18.9" lengthAdjust="spacingAndGlyphs">Sep</text>
<text x="1653.2" y="497.9" font-size="8.1" fill="#6a6a6a" textLength="16.3" lengthAdjust="spacingAndGlyphs">Oct</text>
<text x="1682.6" y="497.9" font-size="8.1" fill="#6a6a6a" textLength="18.9" lengthAdjust="spacingAndGlyphs">Nov</text>
<text x="1713.6" y="497.9" font-size="8.1" fill="#6a6a6a" textLength="19.1" lengthAdjust="spacingAndGlyphs">Dec</text>
<line x1="1364" y1="519" x2="1403.4" y2="519" stroke="#3f97aa" stroke-width="1.1"/>
<path d="M1381.2 519l2.5 -1.9l2.5 1.9l-2.5 1.9z" fill="#2f92c6"/>
<text x="1408.8" y="522.6" font-size="11.4" fill="#595959" textLength="136.1" lengthAdjust="spacingAndGlyphs">Price per transection</text>
<line x1="1565.6" y1="519" x2="1606" y2="519" stroke="#3f97aa" stroke-width="1.1"/>
<path d="M1583.3 519l2.5 -1.9l2.5 1.9l-2.5 1.9z" fill="#48a792"/>
<text x="1610.9" y="522.6" font-size="11.4" fill="#595959" textLength="135.8" lengthAdjust="spacingAndGlyphs">Units per transection</text>
<rect x="394" y="561" width="1389" height="124" fill="#fff" stroke="#47ab9c" stroke-width="6"/>
<text x="462.1" y="610.7" font-size="22.8" font-weight="bold" fill="#1f1f1f" textLength="124.1" lengthAdjust="spacingAndGlyphs">$273.80</text>
<text x="451.6" y="642" font-size="16.6" fill="#595959" textLength="144.1" lengthAdjust="spacingAndGlyphs">Total Sales Per</text>
<text x="470.8" y="659.8" font-size="16.6" fill="#595959" textLength="103.4" lengthAdjust="spacingAndGlyphs">Labor Hour</text>
<text x="823.3" y="610.7" font-size="22.8" font-weight="bold" fill="#1f1f1f" textLength="115.9" lengthAdjust="spacingAndGlyphs">$1.22M</text>
<text x="796.6" y="642" font-size="16.6" fill="#595959" textLength="166.8" lengthAdjust="spacingAndGlyphs">Total Sales for All</text>
<text x="819.8" y="659.8" font-size="16.6" fill="#595959" textLength="118" lengthAdjust="spacingAndGlyphs">Departments</text>
<text x="1198.3" y="610.7" font-size="22.8" font-weight="bold" fill="#1f1f1f" textLength="84.1" lengthAdjust="spacingAndGlyphs">$5.44</text>
<text x="1153" y="642" font-size="16.6" fill="#595959" textLength="72.3" lengthAdjust="spacingAndGlyphs">Average</text>
<text x="1236.6" y="642" font-size="16.6" fill="#595959" textLength="88.8" lengthAdjust="spacingAndGlyphs">Sales per</text>
<text x="1194.4" y="659.8" font-size="16.6" fill="#595959" textLength="86.7" lengthAdjust="spacingAndGlyphs">Unit Area</text>
<text x="1563.7" y="610.7" font-size="22.8" font-weight="bold" fill="#1f1f1f" textLength="123.2" lengthAdjust="spacingAndGlyphs">$178.67</text>
<text x="1513.9" y="642" font-size="16.6" fill="#595959" textLength="72.9" lengthAdjust="spacingAndGlyphs">Average</text>
<text x="1598.1" y="642" font-size="16.6" fill="#595959" textLength="137.5" lengthAdjust="spacingAndGlyphs">Sales Revenue</text>
<text x="1584.5" y="659.8" font-size="16.6" fill="#595959" textLength="80.8" lengthAdjust="spacingAndGlyphs">per Hour</text>
<text x="482.4" y="719" font-size="13" font-weight="bold" fill="#2e2e2e" textLength="34.4" lengthAdjust="spacingAndGlyphs">Top</text>
<text x="524.5" y="719" font-size="13" font-weight="bold" fill="#2e2e2e" textLength="12.8" lengthAdjust="spacingAndGlyphs">7</text>
<text x="544.2" y="719" font-size="13" font-weight="bold" fill="#2e2e2e" textLength="75.1" lengthAdjust="spacingAndGlyphs">Articles</text>
<text x="624.6" y="719" font-size="13" font-weight="bold" fill="#2e2e2e" textLength="25.9" lengthAdjust="spacingAndGlyphs">by</text>
<text x="657.4" y="719" font-size="13" font-weight="bold" fill="#2e2e2e" textLength="43.9" lengthAdjust="spacingAndGlyphs">Sold</text>
<text x="706.1" y="719" font-size="13" font-weight="bold" fill="#2e2e2e" textLength="54.1" lengthAdjust="spacingAndGlyphs">Items</text>
<rect x="429.6" y="817.2" width="26" height="98.8" fill="#eaf5f8"/>
<rect x="431.6" y="819.2" width="22" height="98.8" fill="#3cb09b"/>
<text x="430.2" y="809.2" font-size="10.9" fill="#555" textLength="25.3" lengthAdjust="spacingAndGlyphs">45K</text>
<rect x="489.5" y="773.3" width="26" height="142.7" fill="#eaf5f8"/>
<rect x="491.5" y="775.3" width="22" height="142.7" fill="#1b9fdb"/>
<text x="489.6" y="765.3" font-size="10.9" fill="#555" textLength="25.7" lengthAdjust="spacingAndGlyphs">65K</text>
<rect x="549.3" y="806.2" width="26" height="109.8" fill="#eaf5f8"/>
<rect x="551.3" y="808.2" width="22" height="109.8" fill="#75838b"/>
<text x="549.6" y="798.2" font-size="10.9" fill="#555" textLength="25.6" lengthAdjust="spacingAndGlyphs">50K</text>
<rect x="609.2" y="854.5" width="26" height="61.5" fill="#eaf5f8"/>
<rect x="611.2" y="856.5" width="22" height="61.5" fill="#2b2b2b"/>
<text x="609.3" y="846.5" font-size="10.9" fill="#555" textLength="25.7" lengthAdjust="spacingAndGlyphs">28K</text>
<rect x="669" y="883.1" width="26" height="32.9" fill="#eaf5f8"/>
<rect x="671" y="885.1" width="22" height="32.9" fill="#9fdaf0"/>
<text x="668.8" y="875.1" font-size="10.9" fill="#555" textLength="26.1" lengthAdjust="spacingAndGlyphs">15K</text>
<rect x="728.9" y="839.2" width="26" height="76.8" fill="#eaf5f8"/>
<rect x="730.9" y="841.2" width="22" height="76.8" fill="#1b9fdb"/>
<text x="729.2" y="831.2" font-size="10.9" fill="#555" textLength="25.5" lengthAdjust="spacingAndGlyphs">35K</text>
<rect x="788.7" y="758" width="26" height="158" fill="#eaf5f8"/>
<rect x="790.7" y="760" width="22" height="158" fill="#75838b"/>
<text x="788.9" y="750" font-size="10.9" fill="#555" textLength="25.7" lengthAdjust="spacingAndGlyphs">72K</text>
<text x="1020.4" y="719.1" font-size="14" font-weight="bold" fill="#2e2e2e" textLength="52.9" lengthAdjust="spacingAndGlyphs">Sales</text>
<text x="1079.2" y="719.1" font-size="14" font-weight="bold" fill="#2e2e2e" textLength="23.6" lengthAdjust="spacingAndGlyphs">by</text>
<text x="1110.1" y="719.1" font-size="14" font-weight="bold" fill="#2e2e2e" textLength="40.8" lengthAdjust="spacingAndGlyphs">City</text>
<ellipse cx="1026.2" cy="832.7" rx="110.5" ry="80.5" fill="#e6f6f7"/>
<path d="M1026.2 832.7L1026.2 754.7A108 78 0 0 1 1102.6 777.5Z" fill="#3cb09b" stroke="#f2fbfb" stroke-width="1.2" stroke-linejoin="round"/>
<path d="M1026.2 832.7L1102.6 777.5A108 78 0 0 1 1111.9 880.2Z" fill="#a9e3d7" stroke="#f2fbfb" stroke-width="1.2" stroke-linejoin="round"/>
<path d="M1026.2 832.7L1111.9 880.2A108 78 0 0 1 1023.4 910.7Z" fill="#1b9fdb" stroke="#f2fbfb" stroke-width="1.2" stroke-linejoin="round"/>
<path d="M1026.2 832.7L1023.4 910.7A108 78 0 0 1 964.7 896.8Z" fill="#a5dcf3" stroke="#f2fbfb" stroke-width="1.2" stroke-linejoin="round"/>
<path d="M1026.2 832.7L964.7 896.8A108 78 0 0 1 933.1 872.3Z" fill="#6c7b82" stroke="#f2fbfb" stroke-width="1.2" stroke-linejoin="round"/>
<path d="M1026.2 832.7L933.1 872.3A108 78 0 0 1 921 815.2Z" fill="#a9b4ba" stroke="#f2fbfb" stroke-width="1.2" stroke-linejoin="round"/>
<path d="M1026.2 832.7L921 815.2A108 78 0 0 1 1026.2 754.7Z" fill="#2b2b2b" stroke="#f2fbfb" stroke-width="1.2" stroke-linejoin="round"/>
<polyline points="1095,749 1083,750 1069,759" fill="none" stroke="#dcdcdc" stroke-width="1"/>
<polyline points="897,757 912,759 958,770.5" fill="none" stroke="#dcdcdc" stroke-width="1"/>
<polyline points="1162,832.7 1150,832 1135.7,828" fill="none" stroke="#dcdcdc" stroke-width="1"/>
<polyline points="890,834 903,835 919,843.5" fill="none" stroke="#dcdcdc" stroke-width="1"/>
<text x="1097.7" y="749.7" font-size="10.7" font-weight="bold" fill="#444" textLength="28.3" lengthAdjust="spacingAndGlyphs">35%</text>
<text x="1164.1" y="833.2" font-size="10.7" font-weight="bold" fill="#444" textLength="28.6" lengthAdjust="spacingAndGlyphs">65%</text>
<text x="866.5" y="757.5" font-size="10.7" font-weight="bold" fill="#444" textLength="29.2" lengthAdjust="spacingAndGlyphs">60%</text>
<text x="861" y="835.2" font-size="10.7" font-weight="bold" fill="#444" textLength="28.4" lengthAdjust="spacingAndGlyphs">35%</text>
<rect x="1206" y="757.7" width="4" height="4" fill="#4d98a6"/>
<text x="1214.5" y="763" font-size="11.4" fill="#595959" textLength="65.9" lengthAdjust="spacingAndGlyphs">New York</text>
<rect x="1206" y="782.9" width="4" height="4" fill="#c3e6df"/>
<text x="1214.5" y="788.2" font-size="11.4" fill="#595959" textLength="41.7" lengthAdjust="spacingAndGlyphs">Dailas</text>
<rect x="1206" y="806.3" width="4" height="4" fill="#2f97cc"/>
<text x="1214.5" y="811.6" font-size="11.4" fill="#595959" textLength="82.8" lengthAdjust="spacingAndGlyphs">Los Angeles</text>
<rect x="1206" y="831.2" width="4" height="4" fill="#c3d3d8"/>
<text x="1215" y="836.5" font-size="11.4" fill="#595959" textLength="54.6" lengthAdjust="spacingAndGlyphs">Chicago</text>
<rect x="1206" y="854.5" width="4" height="4" fill="#6a767c"/>
<text x="1215.7" y="859.8" font-size="11.4" fill="#595959" textLength="77.7" lengthAdjust="spacingAndGlyphs">Washington</text>
<rect x="1206" y="879" width="4" height="4" fill="#a9b4ba"/>
<text x="1214.5" y="884.3" font-size="11.4" fill="#595959" textLength="48.5" lengthAdjust="spacingAndGlyphs">Boston</text>
<text x="1460.2" y="719" font-size="13.5" font-weight="bold" fill="#2e2e2e" textLength="35.2" lengthAdjust="spacingAndGlyphs">Out</text>
<text x="1503.3" y="719" font-size="13.5" font-weight="bold" fill="#2e2e2e" textLength="18.3" lengthAdjust="spacingAndGlyphs">of</text>
<text x="1529.3" y="719" font-size="13.5" font-weight="bold" fill="#2e2e2e" textLength="52.9" lengthAdjust="spacingAndGlyphs">Stock</text>
<text x="1590.7" y="719" font-size="13.5" font-weight="bold" fill="#2e2e2e" textLength="53.9" lengthAdjust="spacingAndGlyphs">Items</text>
<text x="1323.5" y="751.8" font-size="10.3" fill="#595959" textLength="38.6" lengthAdjust="spacingAndGlyphs">100%</text>
<text x="1330.8" y="785.2" font-size="10.3" fill="#595959" textLength="28.7" lengthAdjust="spacingAndGlyphs">80%</text>
<text x="1330.7" y="818.6" font-size="10.3" fill="#595959" textLength="28.8" lengthAdjust="spacingAndGlyphs">60%</text>
<text x="1331.1" y="852" font-size="10.3" fill="#595959" textLength="28.4" lengthAdjust="spacingAndGlyphs">40%</text>
<text x="1330.7" y="885.4" font-size="10.3" fill="#595959" textLength="28.8" lengthAdjust="spacingAndGlyphs">20%</text>
<polyline points="1398.8,840.2 1450.2,806.9 1501.6,831.9 1553,868.6 1604.4,890.4 1655.8,856.9 1707.2,773.5 1758.6,882" fill="none" stroke="#e9f7f9" stroke-width="3.4"/>
<rect x="1438.8" y="865" width="23.6" height="48.4" fill="#e6f6f6"/>
<rect x="1440.8" y="867" width="19.6" height="48.4" fill="#3cb09b"/>
<rect x="1490.2" y="870" width="23.6" height="43.4" fill="#e6f6f6"/>
<rect x="1492.2" y="872" width="19.6" height="43.4" fill="#8fd2c5"/>
<rect x="1593" y="855.8" width="23.6" height="57.6" fill="#e6f6f6"/>
<rect x="1595" y="857.8" width="19.6" height="57.6" fill="#3cb09b"/>
<rect x="1644.4" y="831.1" width="23.6" height="82.3" fill="#e6f6f6"/>
<rect x="1646.4" y="833.1" width="19.6" height="82.3" fill="#3cb09b"/>
<rect x="1695.8" y="839.1" width="23.6" height="74.3" fill="#e6f6f6"/>
<rect x="1697.8" y="841.1" width="19.6" height="74.3" fill="#3cb09b"/>
<rect x="1747.2" y="803.2" width="23.6" height="110.2" fill="#e6f6f6"/>
<rect x="1749.2" y="805.2" width="19.6" height="110.2" fill="#3cb09b"/>
<polyline points="1398.8,840.2 1450.2,806.9 1501.6,831.9 1553,868.6 1604.4,890.4 1655.8,856.9 1707.2,773.5 1758.6,882" fill="none" stroke="#4aa2bb" stroke-width="1.15"/>
<path d="M1394.7 840.2l4.1 -3.1l4.1 3.1l-4.1 3.1z" fill="#2f92c6"/>
<path d="M1446.1 806.9l4.1 -3.1l4.1 3.1l-4.1 3.1z" fill="#2f92c6"/>
<path d="M1497.5 831.9l4.1 -3.1l4.1 3.1l-4.1 3.1z" fill="#2f92c6"/>
<path d="M1548.9 868.6l4.1 -3.1l4.1 3.1l-4.1 3.1z" fill="#2f92c6"/>
<path d="M1600.3 890.4l4.1 -3.1l4.1 3.1l-4.1 3.1z" fill="#2f92c6"/>
<path d="M1651.7 856.9l4.1 -3.1l4.1 3.1l-4.1 3.1z" fill="#2f92c6"/>
<path d="M1703.1 773.5l4.1 -3.1l4.1 3.1l-4.1 3.1z" fill="#2f92c6"/>
<path d="M1754.5 882l4.1 -3.1l4.1 3.1l-4.1 3.1z" fill="#2f92c6"/>
</svg>
    </div>
    <div id="msb"><div class="arr" style="left:4px;top:7px;border-bottom:4px solid #a3a3a3"></div><div class="th"></div><div class="arr" style="left:4px;top:764px;border-top:4px solid #505050"></div></div>
  </div>
</div>

<div id="foot">
  <span style="left:614px">Hosting Provider - ALRASYAT SOLUTIONS</span>
  <span style="left:847px">© 2020 - 2025 Copyright: ALRASYAT SOLUTIONS</span>
  <span style="left:1116px">Powered By - ALRASYAT SOLUTIONS</span>
</div>
</body>
</html>
